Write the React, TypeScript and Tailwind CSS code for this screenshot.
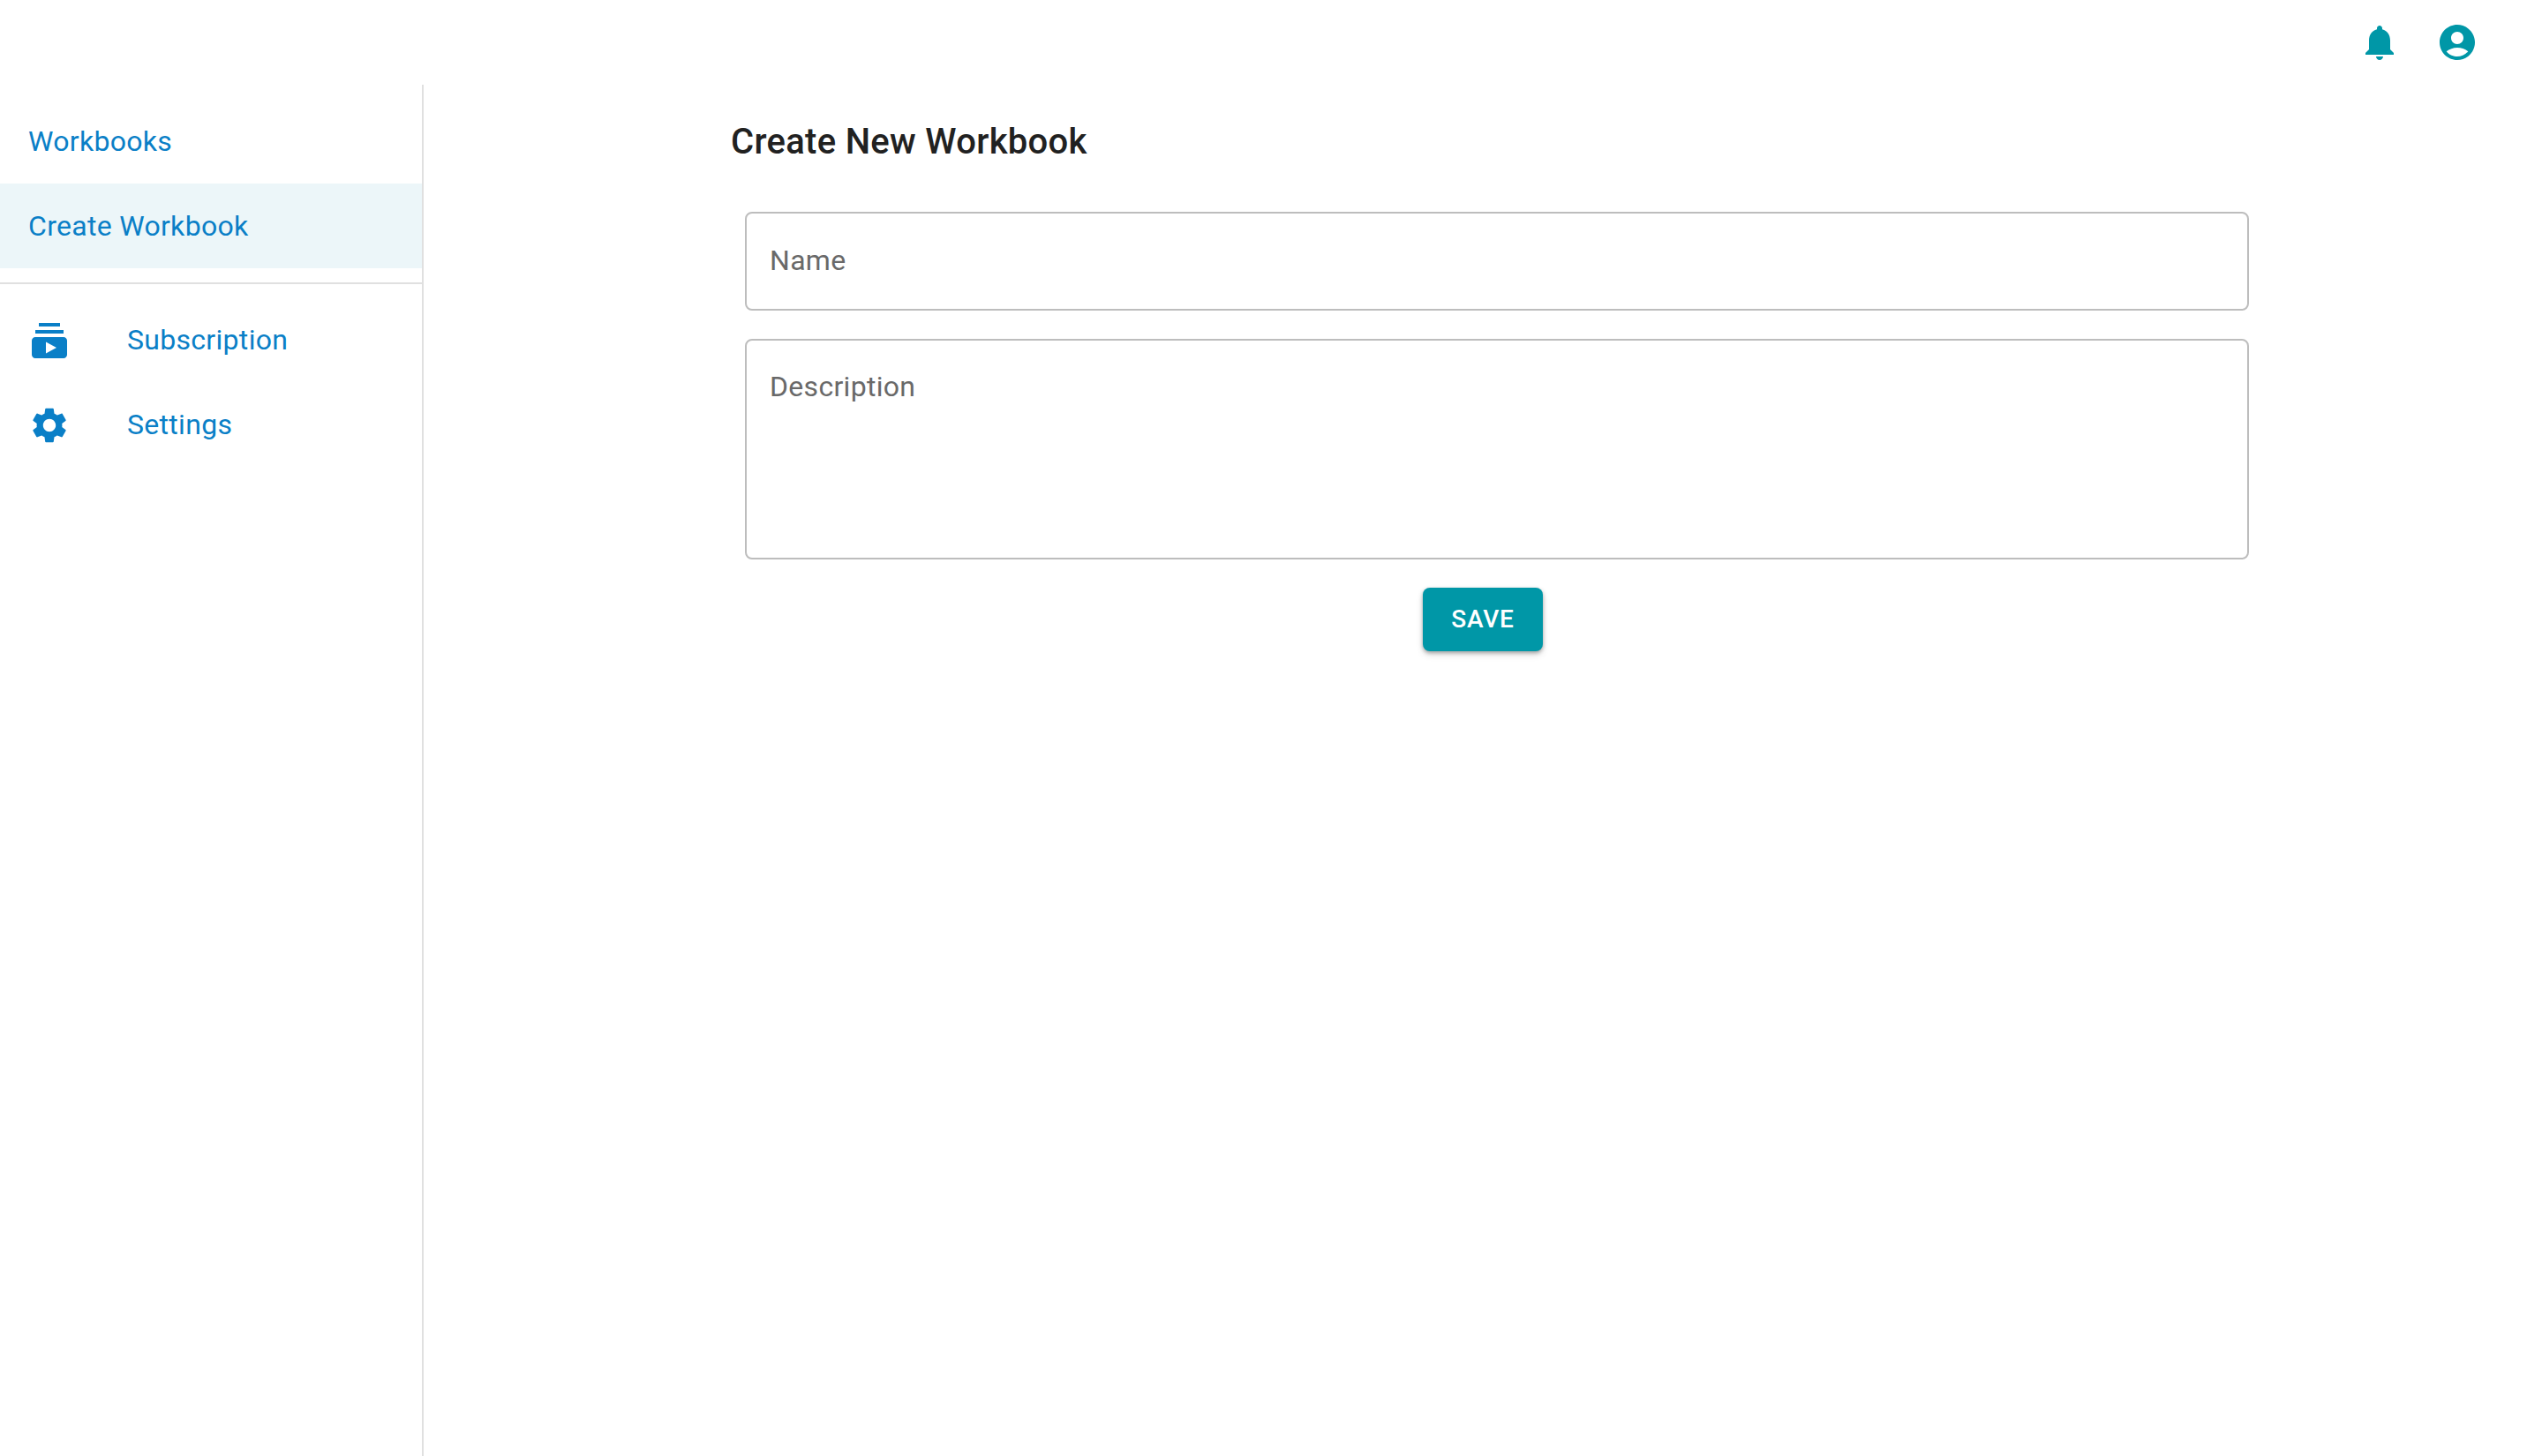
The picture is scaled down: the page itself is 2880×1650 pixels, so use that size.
const ICONS = {
  subscriptions:
    "M20 8H4V6h16v2zm-2-6H6v2h12V2zm4 10v8c0 1.1-.9 2-2 2H4c-1.1 0-2-.9-2-2v-8c0-1.1.9-2 2-2h16c1.1 0 2 .9 2 2zm-6 4l-6-3.27v6.53L16 16z",
  settings:
    "M19.14 12.94c.04-.3.06-.61.06-.94 0-.32-.02-.64-.07-.94l2.03-1.58c.18-.14.23-.41.12-.61l-1.92-3.32c-.12-.22-.37-.29-.59-.22l-2.39.96c-.5-.38-1.03-.7-1.62-.94l-.36-2.54c-.04-.24-.24-.41-.48-.41h-3.84c-.24 0-.43.17-.47.41l-.36 2.54c-.59.24-1.13.57-1.62.94l-2.39-.96c-.22-.08-.47 0-.59.22L2.74 8.87c-.12.21-.08.47.12.61l2.03 1.58c-.05.3-.09.63-.09.94s.02.64.07.94l-2.03 1.58c-.18.14-.23.41-.12.61l1.92 3.32c.12.22.37.29.59.22l2.39-.96c.5.38 1.03.7 1.62.94l.36 2.54c.05.24.24.41.48.41h3.84c.24 0 .44-.17.47-.41l.36-2.54c.59-.24 1.13-.56 1.62-.94l2.39.96c.22.08.47 0 .59-.22l1.92-3.32c.12-.22.07-.47-.12-.61l-2.01-1.58zM12 15.6c-1.98 0-3.6-1.62-3.6-3.6s1.62-3.6 3.6-3.6 3.6 1.62 3.6 3.6-1.62 3.6-3.6 3.6z",
  bell: "M12 22c1.1 0 2-.9 2-2h-4c0 1.1.89 2 2 2zm6-6v-5c0-3.07-1.64-5.64-4.5-6.32V4c0-.83-.67-1.5-1.5-1.5s-1.5.67-1.5 1.5v.68C7.63 5.36 6 7.92 6 11v5l-2 2v1h16v-1l-2-2z",
  account:
    "M12 2C6.48 2 2 6.48 2 12s4.48 10 10 10 10-4.48 10-10S17.52 2 12 2zm0 4c1.93 0 3.5 1.57 3.5 3.5S13.93 13 12 13s-3.5-1.57-3.5-3.5S10.07 6 12 6zm0 14c-2.03 0-4.43-.82-6.14-2.88C7.55 15.8 9.68 15 12 15s4.45.8 6.14 2.12C16.43 19.18 14.03 20 12 20z",
};

function Icon({ d, className }: { d: string; className: string }) {
  return (
    <svg viewBox="0 0 24 24" fill="currentColor" className={className}>
      <path d={d} />
    </svg>
  );
}

export default function App() {
  return (
    <div className="h-[1650px] w-[2880px] overflow-hidden bg-white font-['Roboto',sans-serif] flex flex-col">
      <header className="h-24 shrink-0 flex justify-end items-start gap-10 pt-6 pr-[72px] text-[#0097a7]">
        <Icon d={ICONS.bell} className="w-12 h-12" />
        <Icon d={ICONS.account} className="w-12 h-12" />
      </header>
      <div className="flex flex-1 min-h-0">
        <nav className="w-[480px] shrink-0 border-r-2 border-[#e0e0e0] text-[32px] tracking-[0.3px] text-[#0a7fc7]">
          <ul className="py-4">
            <li className="h-24 flex items-center px-8 pb-px">Workbooks</li>
            <li className="h-24 flex items-center px-8 pb-px bg-[#ecf6f9]">Create Workbook</li>
          </ul>
          <div className="h-0.5 bg-[#e0e0e0]" />
          <ul className="py-4">
            <li className="h-24 flex items-center px-8">
              <span className="w-28 shrink-0">
                <Icon d={ICONS.subscriptions} className="w-12 h-12" />
              </span>
              <span className="-mt-0.5">Subscription</span>
            </li>
            <li className="h-24 flex items-center px-8">
              <span className="w-28 shrink-0">
                <Icon d={ICONS.settings} className="w-12 h-12" />
              </span>
              <span className="-mt-0.5">Settings</span>
            </li>
          </ul>
        </nav>
        <main className="flex-1 min-w-0">
          <div className="w-[1704px] mx-auto">
            <h1 className="h-[129px] mb-[15px] flex items-center text-[40px] font-medium tracking-[0.3px] text-[#212121]">
              Create New Workbook
            </h1>
            <form className="flex flex-col gap-8">
              <input
                placeholder="Name"
                className="ml-4 w-[1704px] h-28 shrink-0 border-2 border-[#bdbdbd] rounded-lg pl-[26px] pr-[27px] pb-[3px] text-[32px] tracking-[0.3px] placeholder:text-[#696969] outline-none"
              />
              <textarea
                placeholder="Description"
                className="ml-4 w-[1704px] h-[250px] shrink-0 border-2 border-[#bdbdbd] rounded-lg pl-[26px] pr-[27px] pt-[33px] leading-[38px] text-[32px] tracking-[0.3px] placeholder:text-[#696969] outline-none resize-none"
              />
              <button
                type="button"
                className="self-center w-[136px] h-[72px] rounded-lg bg-[#0097a7] text-white text-[28px] font-medium tracking-[0.8px] shadow-[0_2px_4px_rgba(0,0,0,0.3),0_4px_8px_rgba(0,0,0,0.12)]"
              >
                SAVE
              </button>
            </form>
          </div>
        </main>
      </div>
    </div>
  );
}
